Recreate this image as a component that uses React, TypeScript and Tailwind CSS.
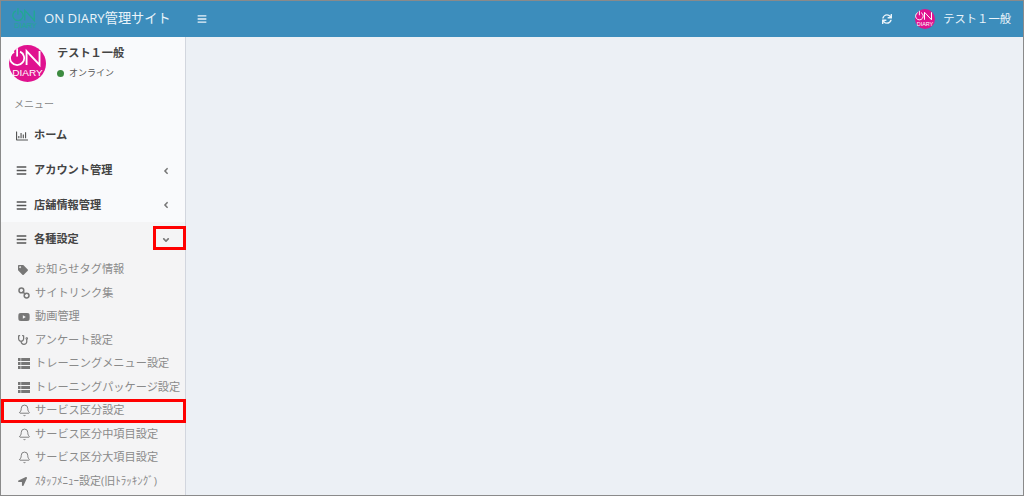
import { FaAngleDown, FaAngleLeft, FaBars, FaLocationArrow, FaRegChartBar, FaStethoscope, FaSync, FaTag, FaYoutube } from "react-icons/fa";
import { Bell } from "lucide-react";
import type { ReactNode } from "react";

const font = { fontFamily: '"Open Sans","Noto Sans CJK JP",sans-serif' };

function Logo({ size, color, bg }: { size: number; color: string; bg?: string }) {
  return (
    <svg width={size} height={size} viewBox="0 0 40 40" className="shrink-0">
      {bg && <circle cx="20" cy="20" r="20" fill={bg} />}
      <path d="M5.6 7.2A7.6 7.6 0 1 0 12 7.2" fill="none" stroke={color} strokeWidth="1.9" />
      <path d="M8.8 3.5v9" stroke={color} strokeWidth="1.9" />
      <path d="M19 21.5V6.5l14 15V6.5" fill="none" stroke={color} strokeWidth="2" />
      <text x="3.5" y="33" fontSize="10.5" fill={color} fontFamily="Liberation Sans, sans-serif" textLength="33" lengthAdjust="spacingAndGlyphs">DIARY</text>
    </svg>
  );
}

function LinkIcon() {
  return (
    <svg width="12" height="12" viewBox="0 0 12 12" fill="none" stroke="#777" strokeWidth="1.5">
      <circle cx="3.4" cy="3.4" r="2.4" />
      <circle cx="8.6" cy="8.6" r="2.4" />
      <path d="M4.5 4.5l3 3" />
    </svg>
  );
}

function ListIcon() {
  return (
    <svg width="12" height="11" viewBox="0 0 12 11" fill="#777">
      <path d="M0 0h2.6v3H0zM3.2 0H12v3H3.2zM0 4h2.6v3H0zM3.2 4H12v3H3.2zM0 8h2.6v3H0zM3.2 8H12v3H3.2z" />
    </svg>
  );
}

function MainItem({ icon, label, arrow, active, h }: { icon: ReactNode; label: string; arrow?: ReactNode; active?: boolean; h: string }) {
  return (
    <div className={`flex items-center pl-[15px] pr-[14px] text-[11.2px] font-bold text-[#444] ${h} ${active ? "bg-[#f4f4f5]" : ""}`}>
      <span className="flex w-[18px] justify-start text-[#555]">{icon}</span>
      <span className="flex-1">{label}</span>
      {arrow && <span className="text-[#777]">{arrow}</span>}
    </div>
  );
}

function SubItem({ icon, label, small }: { icon: ReactNode; label: string; small?: boolean }) {
  return (
    <div className={`flex h-[23.5px] items-center pl-[17px] text-[#8a8a8a] ${small ? "text-[11px]" : "text-[11.2px]"}`}>
      <span className="flex w-[17px] shrink-0 justify-start text-[#777]">{icon}</span>
      <span className="whitespace-nowrap">{label}</span>
    </div>
  );
}

const bars = <FaBars size={11} />;
const bell = <Bell size={13} strokeWidth={1.7} />;
const list = <ListIcon />;

export default function App() {
  return (
    <div style={font} className="relative flex h-[496px] w-[1024px] flex-col overflow-hidden border-x border-y border-[#8a8a8a] bg-[#ecf0f5]">
      <header className="flex h-[36px] shrink-0 items-center bg-[#3c8dbc] text-white">
        <div className="flex w-[184px] items-center pl-[11px]">
          <Logo size={27} color="#22a892" />
          <span className="ml-[5px] whitespace-nowrap text-[13.2px] text-[#eaf4fa]">ON DIARY管理サイト</span>
        </div>
        <span className="ml-[12px] text-[#eaf4fa]"><FaBars size={10} /></span>
        <div className="ml-auto flex items-center pr-[12px] text-[11.3px] text-[#eaf4fa]">
          <FaSync size={10} className="mr-[23px]" />
          <Logo size={20} color="#fff" bg="#e0128f" />
          <span className="ml-[8px]">テスト１一般</span>
        </div>
      </header>
      <div className="flex min-h-0 flex-1">
        <aside className="flex w-[185px] shrink-0 flex-col border-r border-[#d2d6de] bg-[#f9fafc]">
          <div className="flex h-[50px] items-start pl-[8px] pt-[8px]">
            <Logo size={37} color="#fff" bg="#e0128f" />
            <div className="ml-[11px]">
              <div className="text-[11.2px] leading-[16px] font-bold text-[#444]">テスト１一般</div>
              <div className="mt-[5px] flex items-center text-[9px] leading-[14px] text-[#555]">
                <span className="mr-[5px] h-[7px] w-[7px] rounded-full bg-[#3d8b40]" />オンライン
              </div>
            </div>
          </div>
          <div className="flex h-[31px] items-center pl-[13px] pt-[3px] text-[10px] text-[#888]">メニュー</div>
          <MainItem h="h-[35px]" icon={<FaRegChartBar size={12} />} label="ホーム" />
          <MainItem h="h-[35px]" icon={bars} label="アカウント管理" arrow={<FaAngleLeft size={10} />} />
          <MainItem h="h-[34px]" icon={bars} label="店舗情報管理" arrow={<FaAngleLeft size={10} />} />
          <div className="flex-1 bg-[#f4f4f5]">
            <MainItem active h="h-[35px]" icon={bars} label="各種設定" arrow={<FaAngleDown size={10} />} />
            <div className="pt-[1px]">
              <SubItem icon={<FaTag size={10} />} label="お知らせタグ情報" />
              <SubItem icon={<LinkIcon />} label="サイトリンク集" />
              <SubItem icon={<FaYoutube size={12} />} label="動画管理" />
              <SubItem icon={<FaStethoscope size={10} />} label="アンケート設定" />
              <SubItem icon={list} label="トレーニングメニュー設定" />
              <SubItem icon={list} label="トレーニングパッケージ設定" />
              <SubItem icon={bell} label="サービス区分設定" />
              <SubItem icon={bell} label="サービス区分中項目設定" />
              <SubItem icon={bell} label="サービス区分大項目設定" />
              <SubItem icon={<FaLocationArrow size={9} />} label="ｽﾀｯﾌﾒﾆｭｰ設定(旧ﾄﾗｯｷﾝｸﾞ)" small />
            </div>
          </div>
        </aside>
        <main className="flex-1" />
      </div>
      <div className="absolute left-[152px] top-[225px] h-[24px] w-[33px] border-[3px] border-[#ff0000]" />
      <div className="absolute left-0 top-[398px] h-[24px] w-[185px] border-[3px] border-[#ff0000]" />
    </div>
  );
}
